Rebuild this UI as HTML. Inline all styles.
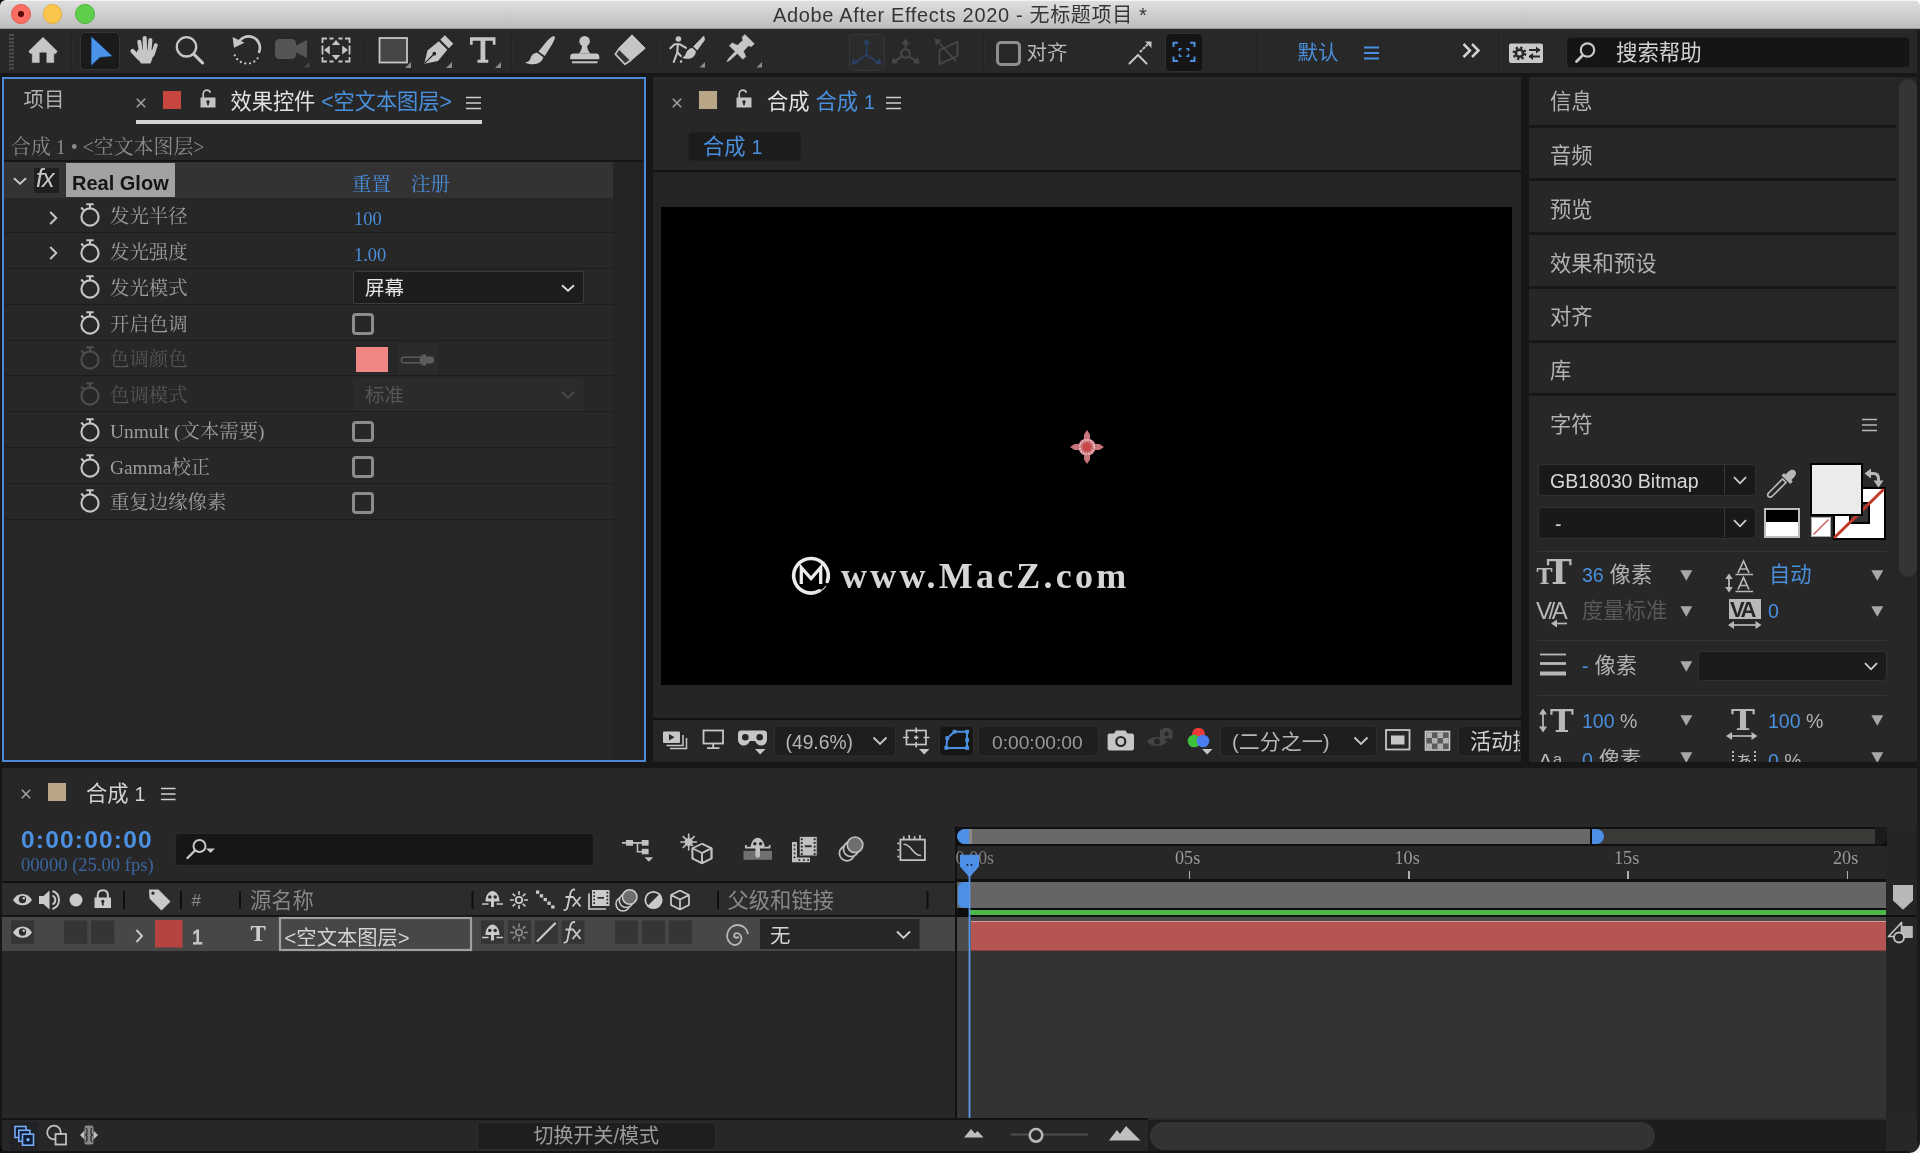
<!DOCTYPE html>
<html lang="zh-CN">
<head>
<meta charset="utf-8">
<title>Adobe After Effects 2020 - 无标题项目 *</title>
<style>
*{box-sizing:border-box;margin:0;padding:0}
html,body{width:1920px;height:1153px;overflow:hidden;background:#171717}
body{position:relative;will-change:transform;font-family:"Liberation Sans","Noto Sans CJK SC",sans-serif;color:#c8c8c8;font-size:19px;line-height:1}
div,span,svg{position:absolute}
.t{white-space:nowrap;line-height:1}
.sans{font-family:"Liberation Sans","Noto Sans CJK SC",sans-serif}
.serif{font-family:"Liberation Serif","Noto Serif CJK SC",serif}
.blue{color:#4a8fdc}
svg{overflow:visible}
span.i{position:static}
/* title bar */
#titlebar{left:0;top:0;width:1920px;height:29px;background:linear-gradient(#e0e0e0,#bdbdbd);border-bottom:1px solid #9a9a9a}
#titlebar .tl{width:19.6px;height:19.6px;border-radius:50%;top:4.3px}
#toolbar{left:0;top:29px;width:1920px;height:44px;background:#282828}
.panel{background:#272727}
.sep{left:4px;width:609px;height:1px;background:#1d1d1d}
.lbl{left:110px;font-size:19.4px;color:#9d9d9d}
.lbl.dis{color:#555}
.cb{left:352px;width:21.5px;height:21.5px;border:3px solid #8c8c8c;border-radius:4px}
.rp{left:1529px;width:368px;height:51px;background:#272727}
.rp .t{left:21px;top:14px;font-size:20px;color:#b4b4b4}
</style>
</head>
<body>
<!-- TITLEBAR -->
<div id="titlebar">
  <div class="tl" style="left:11px;background:#f96d62;border:1px solid #e35a50"></div>
  <div style="left:18px;top:11.3px;width:5.6px;height:5.6px;border-radius:50%;background:#5a0a06"></div>
  <div class="tl" style="left:42.8px;background:#fbc64b;border:1px solid #e3ad38"></div>
  <div class="tl" style="left:75.1px;background:#5fce4a;border:1px solid #4db33c"></div>
  <div class="t sans" style="left:773px;top:5px;font-size:20px;color:#353535;letter-spacing:0.66px">Adobe After Effects 2020 - 无标题项目 *</div>
</div>
<div id="toolbar"></div>
<!-- panel backgrounds -->
<div class="panel" style="left:2px;top:77px;width:644px;height:685px;border:2px solid #4d88d8"></div>
<div class="panel" style="left:653px;top:77px;width:868px;height:685px"></div>
<div class="panel" style="left:2px;top:768px;width:1916px;height:385px"></div>

<!-- TOOLBAR ICONS (page coords) -->
<svg style="left:0;top:28px" width="1920" height="46" viewBox="0 28 1920 46">
<g fill="#4d4d4d"><rect x="9" y="34" width="5" height="2"/><rect x="9" y="37.7" width="5" height="2"/><rect x="9" y="41.4" width="5" height="2"/><rect x="9" y="45.1" width="5" height="2"/><rect x="9" y="48.8" width="5" height="2"/><rect x="9" y="52.5" width="5" height="2"/><rect x="9" y="56.2" width="5" height="2"/><rect x="9" y="59.9" width="5" height="2"/><rect x="9" y="63.6" width="5" height="2"/><rect x="9" y="67.3" width="5" height="2"/></g>
<g stroke="#222" stroke-width="1"><path d="M71.5 34v36M364.5 34v36M511.5 34v36M657.5 34v36M714.5 34v36M810.5 34v36M983.5 34v36M1256.5 30v42M1498.5 30v42"/></g>
<g stroke="#2d2d2d" stroke-width="1"><path d="M72.5 34v36M365.5 34v36M512.5 34v36M658.5 34v36M715.5 34v36M811.5 34v36M984.5 34v36"/></g>
<!-- home -->
<path d="M43 37.3L57.2 51.2L55.8 53.6H53.8V62.6H46.8V52.3H39.3V62.6H32.2V53.6H30.2L28.8 51.2Z" fill="#c6c6c6" stroke="#c6c6c6" stroke-width="0.5" stroke-linejoin="round"/>
<!-- selection tool -->
<rect x="80.5" y="32.5" width="39" height="37" rx="4" fill="#1a1a1a" stroke="#343434"/>
<path d="M91 36L113 56.5L100 57.5L91 66Z" fill="#4b92ea" stroke="#122848" stroke-width="0.8"/>
<!-- hand -->
<g stroke="#c6c6c6" stroke-linecap="round" fill="none"><path d="M139.3 41.7L141 52" stroke-width="4.1"/><path d="M144.7 38.2L145 52" stroke-width="4.2"/><path d="M150.4 40L149.3 52" stroke-width="4.1"/><path d="M155.8 45.2L152.6 55" stroke-width="3.9"/><path d="M132.5 51L139 58" stroke-width="4.2"/></g>
<path d="M137.5 50H153.5C153.5 57 151.5 61 150.5 63.5H141C139.5 61 137 58 136 55Z" fill="#c6c6c6"/>
<!-- zoom -->
<circle cx="186.5" cy="46.8" r="9.7" stroke="#c6c6c6" stroke-width="2.3" fill="none"/><path d="M194 54.3L202.5 62.8" stroke="#c6c6c6" stroke-width="3.2" stroke-linecap="round"/>
<!-- rotate -->
<path d="M237.9 44.1A11.3 11.3 0 1 1 258.7 52.8" stroke="#c6c6c6" stroke-width="2.6" fill="none"/>
<path d="M232.6 37L244.5 42.8L234 47.8Z" fill="#c6c6c6"/>
<g fill="#c6c6c6"><circle cx="234.8" cy="55.3" r="1.15"/><circle cx="237.2" cy="59.2" r="1.15"/><circle cx="240.8" cy="62" r="1.15"/><circle cx="245.3" cy="63.4" r="1.15"/><circle cx="250" cy="63.3" r="1.15"/><circle cx="254.3" cy="61.5" r="1.15"/><circle cx="257.6" cy="58.3" r="1.15"/></g>
<!-- camera (disabled) -->
<rect x="275" y="39" width="21" height="20" rx="4.5" fill="#555"/><path d="M294 46.5L307 40V58L294 51.5Z" fill="#555"/><path d="M309.5 62v5.5H304Z" fill="#4a4a4a"/>
<!-- pan behind -->
<g stroke="#c6c6c6" stroke-width="1.8" fill="none"><path d="M327 38.5H322.5V43M322.5 57V61.5H327M345 38.5H349.5V43M349.5 57V61.5H345M329.5 38.5H333.5M338.5 38.5H342.5M329.5 61.5H333.5M338.5 61.5H342.5M322.5 45.5V54.5M349.5 45.5V54.5"/></g>
<path d="M336 40L340.2 45H331.8ZM336 60L340.2 55H331.8ZM324 50L329.8 45.5V54.5ZM348 50L342.2 45.5V54.5Z" fill="#c6c6c6"/>
<!-- rectangle -->
<rect x="379.5" y="38" width="27.5" height="24.5" fill="#464646" stroke="#c6c6c6" stroke-width="1.8"/><path d="M411 62v6H405Z" fill="#8c8c8c"/>
<!-- pen -->
<path d="M424.3 63.7L427.5 50.5L438.8 41.2L447.3 49.7L438 61Z" fill="#c6c6c6"/><path d="M424.8 63.2L433.5 54.5" stroke="#282828" stroke-width="1.2"/><circle cx="434.3" cy="53.7" r="1.9" fill="#282828"/>
<path d="M440.3 39.7L444.8 35.2L453.3 43.7L448.8 48.2Z" fill="#c6c6c6"/><path d="M452 62v6H446Z" fill="#8c8c8c"/>
<!-- T -->
<path d="M470 37.3H495.5V44.7H492.8V40.8H485.3V59.7H488.3V62.8H477.5V59.7H480.5V40.8H472.7V44.7H470Z" fill="#c6c6c6"/><path d="M501 62v6H495Z" fill="#8c8c8c"/>
<!-- brush -->
<path d="M554.3 36.3C555.5 37 554.8 40 552 44.5L544.8 56L538.5 51.5L547 41C550.3 37.2 553.2 35.6 554.3 36.3Z" fill="#c6c6c6"/>
<path d="M537.3 52.8L543.3 57.3C542.8 61 538.5 64.3 533 64.3C529.5 64.3 527 63.7 525 62.5C528 62.2 529.8 60.8 530.5 58.3C531.4 55 534.2 52.8 537.3 52.8Z" fill="#c6c6c6"/>
<!-- stamp -->
<circle cx="584.6" cy="41.2" r="5.3" fill="#c6c6c6"/><path d="M582 44H587.2C587 48 587.8 51 590.5 53.5H578.7C581.4 51 582.2 48 582 44Z" fill="#c6c6c6"/>
<path d="M573.5 53.5H596C598 53.5 599.3 54.8 599.3 56.5V59.3H570.2V56.5C570.2 54.8 571.5 53.5 573.5 53.5Z" fill="#c6c6c6"/><rect x="572" y="61.3" width="25.5" height="2" fill="#c6c6c6"/>
<!-- eraser -->
<path d="M632 34.8L645.2 48.3L631.5 60L619 48Z" fill="#c6c6c6" stroke="#c6c6c6" stroke-width="1" stroke-linejoin="round"/>
<path d="M619 48.6L630.8 60.2L625 64.3L615.3 54.2Z" fill="#343434" stroke="#c6c6c6" stroke-width="1.7" stroke-linejoin="round"/>
<!-- roto brush -->
<circle cx="678.4" cy="39" r="2.8" fill="#c6c6c6"/>
<g stroke="#c6c6c6" stroke-width="2.1" fill="none" stroke-linecap="round" stroke-linejoin="round"><path d="M670.3 48.3L674.5 44.3H680L686 47.8"/><path d="M677.8 44.5L677.3 52.5L673.8 62"/><path d="M677.5 52.5L680.8 56"/></g>
<circle cx="681" cy="61.5" r="1.2" fill="#c6c6c6"/>
<path d="M693.6 46.6L703.8 36L704.6 39.8L697.2 50Z" fill="#c6c6c6" stroke="#c6c6c6" stroke-width="0.8" stroke-linejoin="round"/>
<path d="M692.2 47.7L695.8 51C696.2 55 692.5 58.8 687.5 58.8C685.2 58.8 683.3 58.6 682 58C684.2 57 685.3 55.5 686 53.3C686.8 50.5 689.3 48.2 692.2 47.7Z" fill="#c6c6c6"/>
<path d="M705 62v5.5H699.5Z" fill="#8c8c8c"/>
<!-- pin -->
<path d="M744.9 34.4L754.3 43.8L751.5 46.6L748.4 45.7L743.4 51.2L745.8 56.5L743 59.3L737.2 53.5L729.8 60.3L727 61.7L728.4 58.9L735.2 51.5L729.4 45.7L732.2 42.9L737.5 45.3L743 40.3L742.1 37.2Z" fill="#c6c6c6" stroke="#c6c6c6" stroke-width="0.6" stroke-linejoin="round"/>
<path d="M762 62v5.5H756.5Z" fill="#8c8c8c"/>
<!-- axis modes (disabled) -->
<rect x="849.5" y="34.5" width="35" height="36" rx="4" fill="#2b2b2b" stroke="#363636"/>
<g stroke="#2a4064" stroke-width="1.7" fill="none"><path d="M866.5 42V55L855 62.5M866.5 55L878 62.5"/></g>
<path d="M866.5 38.5L870.5 44H862.5ZM851.5 64.5L853.3 58.3L858 64.3ZM881.5 64.5L879.7 58.3L875 64.3Z" fill="#2a4064"/>
<g stroke="#484848" stroke-width="2" fill="none"><path d="M905.5 43V49M901.7 56.5L894.5 61.5M909.3 56.5L916.5 61.5"/><circle cx="905.5" cy="53.5" r="4.3"/></g>
<path d="M905.5 38.5L909.5 44.5H901.5ZM891.5 63.5L893.3 57.3L898 63.3ZM919.5 63.5L917.7 57.3L913 63.3Z" fill="#484848"/>
<g stroke="#484848" stroke-width="1.8" fill="none"><path d="M939.5 50L957.5 42V56L939.5 64ZM939 43L956 61"/></g>
<path d="M934.5 38.5L941.3 40L936 45.3Z" fill="#484848"/>
<!-- snap checkbox -->
<rect x="997.5" y="42.5" width="22" height="22" rx="3.5" stroke="#8e8e8e" stroke-width="3" fill="none"/>
<!-- snap icon 1 -->
<g stroke="#c6c6c6" stroke-width="2" fill="none" stroke-linecap="round"><path d="M1129.5 63.5L1138 55L1146.5 63.5"/><path d="M1140.5 51.5L1147 45" stroke-dasharray="1.5 2.6"/></g>
<path d="M1145 41.5H1151.5V48Z" fill="#c6c6c6"/>
<!-- snap icon 2 -->
<rect x="1165.5" y="33.5" width="37.5" height="38" rx="4.5" fill="#151515" stroke="#303030"/>
<g stroke="#4b8fe2" stroke-width="2" fill="none"><path d="M1173.5 47V42.7H1178M1190 42.7H1194.5V47M1194.5 56.5V61H1190M1178 61H1173.5V56.5"/><path d="M1179.5 51.3V48.8H1181.7M1186.3 48.8H1188.5V51.3M1188.5 54V56.3H1186.3M1181.7 56.3H1179.5V54" stroke-width="1.6"/></g>
<!-- workspace hamburger -->
<path d="M1364 47.5H1379M1364 53H1379M1364 58.5H1379" stroke="#4b8fe2" stroke-width="1.9"/>
<!-- >> -->
<path d="M1463.5 44L1470 50.5L1463.5 57M1472 44L1478.5 50.5L1472 57" stroke="#d2d2d2" stroke-width="2.5" fill="none"/>
<!-- sync settings -->
<rect x="1509" y="43.5" width="34" height="19.5" rx="2" fill="#c8c8c8"/>
<g fill="none" stroke="#282828"><circle cx="1519.5" cy="53.3" r="3.6" stroke-width="2.6"/><circle cx="1519.5" cy="53.3" r="5.8" stroke-width="2.3" stroke-dasharray="2.3 2.25"/></g>
<path d="M1529 50H1540M1529 56.5H1540" stroke="#282828" stroke-width="2"/><path d="M1540.5 50L1536 46.5V53.5ZM1528.5 56.5L1533 53V60Z" fill="#282828"/>
<!-- search -->
<rect x="1566.5" y="37" width="343.5" height="31" rx="4.5" fill="#151515" stroke="#2c2c2c"/>
<circle cx="1587.5" cy="50" r="6.7" stroke="#c8c8c8" stroke-width="2.2" fill="none"/><path d="M1582.5 55.5L1576.5 61.5" stroke="#c8c8c8" stroke-width="2.8" stroke-linecap="round"/>
</svg>
<div class="t sans" style="left:1026.5px;top:43px;font-size:20.5px;color:#b8b8b8">对齐</div>
<div class="t sans blue" style="left:1297.5px;top:43px;font-size:20.5px">默认</div>
<div class="t sans" style="left:1616px;top:43px;font-size:21.4px;color:#d2d2d2">搜索帮助</div>

<!-- EFFECT CONTROLS PANEL -->
<div class="t sans" style="left:23.5px;top:90px;font-size:20.5px;color:#b0b0b0">项目</div>
<svg style="left:136px;top:98px" width="10" height="10" viewBox="0 0 10 10"><path d="M0.8 0.8L9.2 9.2M9.2 0.8L0.8 9.2" stroke="#a8a8a8" stroke-width="1.4" fill="none"/></svg>
<div style="left:163px;top:91px;width:18px;height:18px;background:#c9453f"></div>
<svg style="left:200px;top:89px" width="16" height="19" viewBox="0 0 16 19"><path d="M3.2 9V5.2C3.2 2.6 5 1.2 7 1.2c1.6 0 2.9 0.9 3.3 2.6" stroke="#c4c4c4" stroke-width="1.7" fill="none"/><path d="M0.5 8.5h15v10h-15z M8 11.2a1.7 1.7 0 0 0-0.9 3.15V16.3h1.8v-1.95A1.7 1.7 0 0 0 8 11.2z" fill="#c4c4c4" fill-rule="evenodd"/></svg>
<div class="t sans" style="left:230.5px;top:91px;font-size:21.2px;color:#e2e2e2">效果控件 <span class="i blue">&lt;空文本图层&gt;</span></div>
<svg style="left:466px;top:96px" width="16" height="14" viewBox="0 0 16 14"><path d="M0 1.5h15M0 7h15M0 12.5h15" stroke="#d0d0d0" stroke-width="1.7"/></svg>
<div style="left:136px;top:120px;width:346px;height:4px;background:#d4d4d4"></div>
<div class="t serif" style="left:11px;top:137.5px;font-size:19.9px;color:#8b8b8b">合成 1 • &lt;空文本图层&gt;</div>
<div style="left:4px;top:160px;width:639px;height:2px;background:#141414"></div>
<div style="left:613px;top:162px;width:30px;height:598px;background:#242424"></div>
<div style="left:4px;top:162px;width:609px;height:36px;background:#333333"></div>
<svg style="left:13px;top:177px" width="14" height="9" viewBox="0 0 14 9"><path d="M1 1.2L7 6.7L13 1.2" stroke="#c8c8c8" stroke-width="1.9" fill="none"/></svg>
<div style="left:34px;top:168px;width:25px;height:25px;background:#1f1f1f"></div>
<div class="t sans" style="left:36px;top:166px;font-size:25px;font-style:italic;color:#c8c8c8;letter-spacing:-1px">fx</div>
<div style="left:66px;top:163px;width:109px;height:34px;background:#a2a2a2"></div>
<div class="t sans" style="left:72px;top:173px;font-size:20px;font-weight:bold;color:#151515">Real Glow</div>
<div class="t serif blue" style="left:352px;top:174.5px;font-size:19.4px">重置</div>
<div class="t serif blue" style="left:411px;top:174.5px;font-size:19.4px">注册</div>
<div class="sep" style="top:232.4px"></div>
<svg style="left:80px;top:203.4px" width="20" height="24" viewBox="0 0 20 24"><circle cx="10" cy="14" r="8.6" stroke="#c6c6c6" stroke-width="2.1" fill="none"/><path d="M6.3 1.2h7.4M10 1.2v4M1.2 4.6l2.6 2.6" stroke="#c6c6c6" stroke-width="2.1" fill="none"/></svg>
<svg style="left:49px;top:210.7px" width="9" height="14" viewBox="0 0 9 14"><path d="M1.2 1L7.3 7L1.2 13" stroke="#c8c8c8" stroke-width="1.9" fill="none"/></svg>
<div class="t serif lbl" style="top:207.4px">发光半径</div>
<div class="sep" style="top:268.2px"></div>
<svg style="left:80px;top:239.1px" width="20" height="24" viewBox="0 0 20 24"><circle cx="10" cy="14" r="8.6" stroke="#c6c6c6" stroke-width="2.1" fill="none"/><path d="M6.3 1.2h7.4M10 1.2v4M1.2 4.6l2.6 2.6" stroke="#c6c6c6" stroke-width="2.1" fill="none"/></svg>
<svg style="left:49px;top:246.4px" width="9" height="14" viewBox="0 0 9 14"><path d="M1.2 1L7.3 7L1.2 13" stroke="#c8c8c8" stroke-width="1.9" fill="none"/></svg>
<div class="t serif lbl" style="top:243.1px">发光强度</div>
<div class="sep" style="top:303.9px"></div>
<svg style="left:80px;top:274.9px" width="20" height="24" viewBox="0 0 20 24"><circle cx="10" cy="14" r="8.6" stroke="#c6c6c6" stroke-width="2.1" fill="none"/><path d="M6.3 1.2h7.4M10 1.2v4M1.2 4.6l2.6 2.6" stroke="#c6c6c6" stroke-width="2.1" fill="none"/></svg>
<div class="t serif lbl" style="top:278.9px">发光模式</div>
<div class="sep" style="top:339.7px"></div>
<svg style="left:80px;top:310.6px" width="20" height="24" viewBox="0 0 20 24"><circle cx="10" cy="14" r="8.6" stroke="#c6c6c6" stroke-width="2.1" fill="none"/><path d="M6.3 1.2h7.4M10 1.2v4M1.2 4.6l2.6 2.6" stroke="#c6c6c6" stroke-width="2.1" fill="none"/></svg>
<div class="t serif lbl" style="top:314.6px">开启色调</div>
<div class="sep" style="top:375.4px"></div>
<svg style="left:80px;top:346.4px" width="20" height="24" viewBox="0 0 20 24"><circle cx="10" cy="14" r="8.6" stroke="#4e4e4e" stroke-width="2.1" fill="none"/><path d="M6.3 1.2h7.4M10 1.2v4M1.2 4.6l2.6 2.6" stroke="#4e4e4e" stroke-width="2.1" fill="none"/></svg>
<div class="t serif lbl dis" style="top:350.4px">色调颜色</div>
<div class="sep" style="top:411.2px"></div>
<svg style="left:80px;top:382.1px" width="20" height="24" viewBox="0 0 20 24"><circle cx="10" cy="14" r="8.6" stroke="#4e4e4e" stroke-width="2.1" fill="none"/><path d="M6.3 1.2h7.4M10 1.2v4M1.2 4.6l2.6 2.6" stroke="#4e4e4e" stroke-width="2.1" fill="none"/></svg>
<div class="t serif lbl dis" style="top:386.1px">色调模式</div>
<div class="sep" style="top:446.9px"></div>
<svg style="left:80px;top:417.9px" width="20" height="24" viewBox="0 0 20 24"><circle cx="10" cy="14" r="8.6" stroke="#c6c6c6" stroke-width="2.1" fill="none"/><path d="M6.3 1.2h7.4M10 1.2v4M1.2 4.6l2.6 2.6" stroke="#c6c6c6" stroke-width="2.1" fill="none"/></svg>
<div class="t serif lbl" style="top:421.9px">Unmult (文本需要)</div>
<div class="sep" style="top:482.7px"></div>
<svg style="left:80px;top:453.6px" width="20" height="24" viewBox="0 0 20 24"><circle cx="10" cy="14" r="8.6" stroke="#c6c6c6" stroke-width="2.1" fill="none"/><path d="M6.3 1.2h7.4M10 1.2v4M1.2 4.6l2.6 2.6" stroke="#c6c6c6" stroke-width="2.1" fill="none"/></svg>
<div class="t serif lbl" style="top:457.6px">Gamma校正</div>
<div class="sep" style="top:518.5px"></div>
<svg style="left:80px;top:489.4px" width="20" height="24" viewBox="0 0 20 24"><circle cx="10" cy="14" r="8.6" stroke="#c6c6c6" stroke-width="2.1" fill="none"/><path d="M6.3 1.2h7.4M10 1.2v4M1.2 4.6l2.6 2.6" stroke="#c6c6c6" stroke-width="2.1" fill="none"/></svg>
<div class="t serif lbl" style="top:493.4px">重复边缘像素</div>
<div class="t serif blue" style="left:354px;top:210px;font-size:18.4px">100</div>
<div class="t serif blue" style="left:354px;top:245.8px;font-size:18.4px">1.00</div>
<div style="left:353px;top:270.8px;width:231px;height:33px;background:#1d1d1d;border:1px solid #3b3b3b;border-radius:2px"></div>
<div class="t sans" style="left:365px;top:279.2px;font-size:19.5px;color:#e4e4e4">屏幕</div>
<svg style="left:561px;top:283.7px" width="14" height="9" viewBox="0 0 14 9"><path d="M1 1.2L7 6.7L13 1.2" stroke="#d8d8d8" stroke-width="1.9" fill="none"/></svg>
<div class="cb" style="top:313.2px"></div>
<div class="cb" style="top:420.5px"></div>
<div class="cb" style="top:456.2px"></div>
<div class="cb" style="top:492px"></div>
<div style="left:356px;top:347px;width:32px;height:25px;background:#f08784"></div>
<div style="left:397.5px;top:343.2px;width:40.5px;height:31px;background:#2b2b2b"></div>
<svg style="left:400px;top:352.5px" width="36" height="14" viewBox="0 0 36 14"><path d="M1.2 7c0-1.7 1.3-2.8 3-2.8H20.5v5.6H4.2C2.5 9.8 1.2 8.7 1.2 7z" stroke="#5c5c5c" stroke-width="1.5" fill="none"/><path d="M20 3.6h1.5V1.5h4.5v2.1H31.5a2.5 3.4 0 0 1 0 6.8H26v2.1h-4.5v-2.1H20z" fill="#5c5c5c"/></svg>
<div style="left:353px;top:378.1px;width:231px;height:33px;background:#2b2b2b;border-radius:2px"></div>
<div class="t sans" style="left:365px;top:386.4px;font-size:19.5px;color:#555">标准</div>
<svg style="left:561px;top:390.9px" width="14" height="9" viewBox="0 0 14 9"><path d="M1 1.2L7 6.7L13 1.2" stroke="#484848" stroke-width="1.9" fill="none"/></svg>
<!-- COMP PANEL -->
<svg style="left:672px;top:98px" width="10" height="10" viewBox="0 0 10 10"><path d="M0.8 0.8L9.2 9.2M9.2 0.8L0.8 9.2" stroke="#a8a8a8" stroke-width="1.4" fill="none"/></svg>
<div style="left:699px;top:91px;width:18px;height:18px;background:#b9a687"></div>
<svg style="left:736px;top:89px" width="16" height="19" viewBox="0 0 16 19"><path d="M3.2 9V5.2C3.2 2.6 5 1.2 7 1.2c1.6 0 2.9 0.9 3.3 2.6" stroke="#c4c4c4" stroke-width="1.7" fill="none"/><path d="M0.5 8.5h15v10h-15z M8 11.2a1.7 1.7 0 0 0-0.9 3.15V16.3h1.8v-1.95A1.7 1.7 0 0 0 8 11.2z" fill="#c4c4c4" fill-rule="evenodd"/></svg>
<div class="t sans" style="left:767px;top:91.5px;font-size:21.3px;color:#e2e2e2">合成 <span class="i blue">合成 <span class="i" style="font-size:19.5px">1</span></span></div>
<svg style="left:886px;top:96px" width="16" height="14" viewBox="0 0 16 14"><path d="M0 1.5h15M0 7h15M0 12.5h15" stroke="#d0d0d0" stroke-width="1.7"/></svg>
<div style="left:688px;top:132px;width:113px;height:29px;background:#1c1c1c;border:1px solid #202020;border-radius:4px"></div>
<div class="t sans blue" style="left:703px;top:137px;font-size:21.3px">合成 <span class="i" style="font-size:19.5px">1</span></div>
<div style="left:653px;top:170px;width:868px;height:2px;background:#121212"></div>
<div style="left:653px;top:172px;width:868px;height:546px;background:#242424"></div>
<div style="left:661px;top:207px;width:851px;height:478px;background:#000"></div>
<!-- anchor point -->
<svg style="left:1067px;top:426.5px" width="40" height="40" viewBox="0 0 40 40"><defs><filter id="bl"><feGaussianBlur stdDeviation="0.7"/></filter></defs><g filter="url(#bl)"><path d="M17 14V7.5L20 3L23 7.5V14L26 17H32.5L37 20L32.5 23H26L23 26V32.5L20 37L17 32.5V26L14 23H7.5L3 20L7.5 17H14Z" fill="#c9747c"/><circle cx="20" cy="20" r="8.8" fill="#c9747c"/><circle cx="20" cy="20" r="7.2" fill="none" stroke="#ecd0d0" stroke-width="1.8" stroke-dasharray="1.5 1.33"/><circle cx="20" cy="20" r="4.6" fill="#c84646"/></g></svg>
<!-- watermark -->
<svg style="left:789.2px;top:554.4px" width="44" height="44" viewBox="0 0 44 44"><path d="M30.5 36.8A17.3 17.3 0 1 1 38.3 27.5" stroke="#ececec" stroke-width="3.6" fill="none" stroke-linecap="round"/><path d="M12.3 30V13.5L22 24.5L31.7 13.5V30" stroke="#ececec" stroke-width="3.3" fill="none" stroke-linejoin="miter"/><path d="M26 39C30.5 38 34.5 35.5 37 32" stroke="#d0d0d0" stroke-width="1.2" fill="none"/></svg>
<div class="t serif" style="left:841px;top:557.7px;font-size:36px;font-weight:bold;color:#d6d6d6;letter-spacing:3.2px">www.MacZ.com</div>
<!-- comp footer -->
<div style="left:653px;top:718px;width:868px;height:2px;background:#111"></div>
<div style="left:653px;top:720px;width:868px;height:42px;background:#262626"></div>
<svg style="left:653px;top:720px" width="868" height="42" viewBox="653 720 868 42">
<!-- always preview -->
<rect x="663" y="731.5" width="17" height="11.5" rx="1" fill="#c6c6c6"/><path d="M669 734L674.5 737.3L669 740.6Z" fill="#262626"/>
<path d="M666.5 745.5H683V735M670 748.5H686.5V738" stroke="#c6c6c6" stroke-width="1.5" fill="none"/>
<!-- monitor -->
<rect x="703.5" y="730.5" width="19.5" height="13" stroke="#c6c6c6" stroke-width="1.8" fill="none"/><path d="M713.2 743.5V747.5M707 748.2H719.5" stroke="#c6c6c6" stroke-width="1.8"/>
<!-- goggles -->
<path d="M741 730.5H764C766 730.5 767 732 767 733.5V739C767 743 764.5 745.5 761.5 745.5C758 745.5 756.5 743.5 755 741H750C748.5 743.5 747 745.5 743.5 745.5C740.5 745.5 738 743 738 739V733.5C738 732 739 730.5 741 730.5Z" fill="#c6c6c6"/>
<circle cx="745.3" cy="737.3" r="3.3" fill="#262626"/><circle cx="759.7" cy="737.3" r="3.3" fill="#262626"/><path d="M755 749H765.5L760.2 754.5Z" fill="#c6c6c6"/>
<!-- zoom dropdown -->
<rect x="774.5" y="726" width="121" height="30" rx="4" fill="#1e1e1e" stroke="#2e2e2e"/>
<path d="M873.5 737.5L880 744L886.5 737.5" stroke="#c6c6c6" stroke-width="1.9" fill="none"/>
<!-- ROI -->
<rect x="906.5" y="730.5" width="19.5" height="14" stroke="#c6c6c6" stroke-width="1.7" fill="none"/><path d="M916.2 727.5V733M916.2 742V747.5M903 737.5H909M923.5 737.5H929.5M914 737.5H918.5M916.2 735.5V739.5" stroke="#c6c6c6" stroke-width="1.6"/><path d="M919 749H929.5L924.2 754.5Z" fill="#c6c6c6"/>
<!-- mask toggle -->
<rect x="939.5" y="726" width="34" height="30" rx="4" fill="#161616" stroke="#2c2c2c"/>
<path d="M946.3 748L947.3 738L954.5 731.7H967V748Z" stroke="#4b8fe2" stroke-width="2" fill="none"/><g fill="#4b8fe2"><rect x="944.4" y="746" width="3.8" height="3.8"/><rect x="945.4" y="736.2" width="3.8" height="3.8"/><rect x="952.6" y="729.8" width="3.8" height="3.8"/><rect x="965.2" y="729.8" width="3.8" height="3.8"/><rect x="965.2" y="746" width="3.8" height="3.8"/><rect x="965.2" y="738" width="3.8" height="3.8"/></g>
<!-- timecode box -->
<rect x="978.5" y="726" width="120" height="30" rx="4" fill="#1e1e1e" stroke="#2e2e2e"/>
<!-- camera -->
<path d="M1109.5 733.5H1114L1116 730.5H1125.5L1127.5 733.5H1132C1133 733.5 1134 734.3 1134 735.5V748.5C1134 749.6 1133 750.4 1132 750.4H1109.5C1108.5 750.4 1107.6 749.6 1107.6 748.5V735.5C1107.6 734.3 1108.5 733.5 1109.5 733.5Z" fill="#c6c6c6"/><circle cx="1120.8" cy="741.5" r="4.5" fill="#c6c6c6" stroke="#262626" stroke-width="2.2"/>
<!-- show snapshot (disabled) -->
<path d="M1147 741.5C1151 735.5 1163 735.5 1167 741.5C1163 747.5 1151 747.5 1147 741.5Z" fill="#444"/><circle cx="1157" cy="741.5" r="3" fill="#262626"/>
<path d="M1160 729.5H1163L1164 728H1169L1170 729.5H1172.5V738.5H1160Z" fill="#444"/><circle cx="1166.5" cy="734" r="2.2" fill="#262626"/>
<!-- RGB -->
<circle cx="1198.5" cy="734" r="6.3" fill="#ee3b3b"/><circle cx="1194" cy="741" r="6.3" fill="#3cc23c"/><circle cx="1203" cy="741" r="6.3" fill="#4a7cf0"/><path d="M1202 749H1212.5L1207.2 754.5Z" fill="#c6c6c6"/>
<!-- resolution -->
<rect x="1220.5" y="726" width="156" height="30" rx="4" fill="#1e1e1e" stroke="#2e2e2e"/>
<path d="M1354.5 737.5L1361 744L1367.5 737.5" stroke="#c6c6c6" stroke-width="1.9" fill="none"/>
<!-- ROI safe -->
<rect x="1386" y="730" width="23.5" height="19.5" stroke="#c6c6c6" stroke-width="1.8" fill="none"/><rect x="1391" y="735.5" width="13.5" height="9" fill="#c6c6c6"/>
<!-- checker -->
<rect x="1425.5" y="731.5" width="24" height="18.5" fill="#5a5a5a" stroke="#c6c6c6" stroke-width="1.6"/>
<g fill="#c6c6c6" opacity="0.8"><rect x="1426.5" y="732.5" width="5.5" height="5.5"/><rect x="1437.5" y="732.5" width="5.5" height="5.5"/><rect x="1432" y="738" width="5.5" height="5.5"/><rect x="1443" y="738" width="5.5" height="5.5"/><rect x="1426.5" y="743.5" width="5.5" height="5.5"/><rect x="1437.5" y="743.5" width="5.5" height="5.5"/></g>
<!-- camera dropdown (clipped) -->
<rect x="1458.5" y="726" width="80" height="30" rx="4" fill="#1e1e1e" stroke="#2e2e2e"/>
</svg>
<div class="t sans" style="left:785.5px;top:732.5px;font-size:19.3px;color:#b6b6b6">(49.6%)</div>
<div class="t sans" style="left:992px;top:732.5px;font-size:19.2px;color:#9a9a9a">0:00:00:00</div>
<div class="t sans" style="left:1232px;top:731px;font-size:21px;color:#b6b6b6"><span class="i" style="font-size:20.5px">(</span>二分之一<span class="i" style="font-size:20.5px">)</span></div>
<div style="left:1458px;top:724px;width:62px;height:34px;overflow:hidden"><div class="t sans" style="left:12px;top:8px;font-size:21.3px;color:#d2d2d2">活动摄像机</div></div>
<div style="left:1521px;top:720px;width:8px;height:42px;background:#171717"></div>

<!-- RIGHT PANELS -->
<div style="left:1529px;top:77px;width:367px;height:47.7px;background:#272727"></div>
<div class="t sans" style="left:1550px;top:92.3px;font-size:21.3px;color:#b2b2b2">信息</div>
<div style="left:1529px;top:127.7px;width:367px;height:50.7px;background:#272727"></div>
<div class="t sans" style="left:1550px;top:146px;font-size:21.3px;color:#b2b2b2">音频</div>
<div style="left:1529px;top:181.4px;width:367px;height:50.7px;background:#272727"></div>
<div class="t sans" style="left:1550px;top:199.7px;font-size:21.3px;color:#b2b2b2">预览</div>
<div style="left:1529px;top:235.1px;width:367px;height:50.7px;background:#272727"></div>
<div class="t sans" style="left:1550px;top:253.5px;font-size:21.3px;color:#b2b2b2">效果和预设</div>
<div style="left:1529px;top:288.9px;width:367px;height:50.7px;background:#272727"></div>
<div class="t sans" style="left:1550px;top:307.2px;font-size:21.3px;color:#b2b2b2">对齐</div>
<div style="left:1529px;top:342.6px;width:367px;height:50.7px;background:#272727"></div>
<div class="t sans" style="left:1550px;top:360.9px;font-size:21.3px;color:#b2b2b2">库</div>
<div style="left:1529px;top:396.3px;width:367px;height:365.7px;background:#272727"></div>
<div class="t sans" style="left:1550px;top:414.6px;font-size:21.3px;color:#b2b2b2">字符</div>
<svg style="left:1862px;top:418px" width="16" height="14" viewBox="0 0 16 14"><path d="M0 1.5h15M0 7h15M0 12.5h15" stroke="#b8b8b8" stroke-width="1.7"/></svg>
<div style="left:1896px;top:77px;width:21px;height:685px;background:#262626"></div>
<div style="left:1898.5px;top:78.5px;width:18px;height:498px;background:#353535;border-radius:9px"></div>
<div style="left:1538px;top:464.2px;width:218px;height:31.7px;background:#191919;border:1px solid #303030;border-radius:4px"></div>
<div style="left:1724px;top:465.2px;width:1px;height:29px;background:#383838"></div>
<svg style="left:1733px;top:475.7px" width="14" height="9" viewBox="0 0 14 9"><path d="M1 1.2L7 7.3L13 1.2" stroke="#d0d0d0" stroke-width="1.8" fill="none"/></svg>
<div style="left:1538px;top:507px;width:218px;height:31.7px;background:#191919;border:1px solid #303030;border-radius:4px"></div>
<div style="left:1724px;top:508px;width:1px;height:29px;background:#383838"></div>
<svg style="left:1733px;top:518.5px" width="14" height="9" viewBox="0 0 14 9"><path d="M1 1.2L7 7.3L13 1.2" stroke="#d0d0d0" stroke-width="1.8" fill="none"/></svg>
<div class="t sans" style="left:1550px;top:472px;font-size:19.5px;color:#d8d8d8">GB18030 Bitmap</div>
<div class="t sans" style="left:1555px;top:515px;font-size:19.5px;color:#d8d8d8">-</div>
<svg style="left:1766px;top:466px" width="33" height="33" viewBox="0 0 33 33"><path d="M3 26.5L16.5 13L20 16.5L6.5 30C5 31.3 3.3 31.3 2.3 30.3C1.3 29.3 1.5 27.8 3 26.5Z" stroke="#b8b8b8" stroke-width="1.7" fill="none"/><path d="M15.5 9.5L18 7L19.5 8.5L22.5 5.5C24.5 3.5 27.5 3.3 29 4.8C30.5 6.3 30.3 9 28.3 11L25.3 14L26.8 15.5L24.3 18Z" fill="#b8b8b8"/></svg>
<div style="left:1832.5px;top:487px;width:53.5px;height:52.5px;background:#fff;border:2px solid #000"></div>
<div style="left:1848.5px;top:502px;width:21px;height:21.5px;background:#333;border:2px solid #000"></div>
<svg style="left:1832px;top:487px" width="54" height="53" viewBox="0 0 54 53"><path d="M2 51L52 2" stroke="#c0392b" stroke-width="3"/></svg>
<div style="left:1809.5px;top:463px;width:53px;height:52.5px;background:#ebebeb;border:2px solid #000"></div>
<svg style="left:1864px;top:466px" width="21" height="22" viewBox="0 0 21 22"><path d="M5 7.5H9.5C13 7.5 14.5 9.5 14.5 13V15" stroke="#b8b8b8" stroke-width="3" fill="none"/><path d="M0.5 7.5L7 2.5V12.5ZM14.5 21.5L9.5 14.5H19.5Z" fill="#b8b8b8"/></svg>
<div style="left:1764px;top:508px;width:36px;height:30px;background:#fff;border:2px solid #bdbdbd"></div><div style="left:1766px;top:510px;width:32px;height:12px;background:#000"></div>
<div style="left:1811px;top:516.5px;width:20px;height:20px;background:#fff;border:1.5px solid #aaa"></div>
<svg style="left:1811px;top:516.5px" width="20" height="20" viewBox="0 0 20 20"><path d="M2.5 17.5L17.5 2.5" stroke="#c0504a" stroke-width="1.3"/></svg>
<div style="left:1538px;top:550.5px;width:349px;height:1px;background:#343434"></div>
<div style="left:1538px;top:639.5px;width:349px;height:1px;background:#343434"></div>
<div style="left:1538px;top:695px;width:349px;height:1px;background:#343434"></div>
<div class="t sans" style="left:1582px;top:564.5px;font-size:21.3px;color:#b2b2b2"><span class="i blue" style="font-size:19.5px">36</span> 像素</div>
<svg style="left:1680px;top:569.5px" width="13" height="11" viewBox="0 0 13 11"><path d="M0.3 0.3H12.3L6.3 10.8Z" fill="#a8a8a8"/></svg>
<svg style="left:1871px;top:569.5px" width="13" height="11" viewBox="0 0 13 11"><path d="M0.3 0.3H12.3L6.3 10.8Z" fill="#a8a8a8"/></svg>
<div class="t sans blue" style="left:1769px;top:564.5px;font-size:21.3px">自动</div>
<div class="t sans" style="left:1582px;top:600.5px;font-size:21.3px;color:#585858">度量标准</div>
<svg style="left:1680px;top:605.5px" width="13" height="11" viewBox="0 0 13 11"><path d="M0.3 0.3H12.3L6.3 10.8Z" fill="#a8a8a8"/></svg>
<svg style="left:1871px;top:605.5px" width="13" height="11" viewBox="0 0 13 11"><path d="M0.3 0.3H12.3L6.3 10.8Z" fill="#a8a8a8"/></svg>
<div class="t sans blue" style="left:1768px;top:602px;font-size:19.5px">0</div>
<div class="t sans" style="left:1582px;top:656px;font-size:21.3px;color:#b2b2b2"><span class="i blue" style="font-size:19.5px">-</span> 像素</div>
<svg style="left:1680px;top:660.5px" width="13" height="11" viewBox="0 0 13 11"><path d="M0.3 0.3H12.3L6.3 10.8Z" fill="#a8a8a8"/></svg>
<div style="left:1697.5px;top:650.5px;width:189.5px;height:30.5px;background:#1b1b1b;border:1px solid #303030;border-radius:4px"></div>
<svg style="left:1864px;top:662px" width="14" height="9" viewBox="0 0 14 9"><path d="M1 1.2L7 7.3L13 1.2" stroke="#d0d0d0" stroke-width="1.8" fill="none"/></svg>
<div class="t sans" style="left:1582px;top:711.5px;font-size:19.5px;color:#b2b2b2"><span class="i blue">100</span> %</div>
<div class="t sans" style="left:1768px;top:712px;font-size:19.5px;color:#b2b2b2"><span class="i blue">100</span> %</div>
<svg style="left:1680px;top:714.5px" width="13" height="11" viewBox="0 0 13 11"><path d="M0.3 0.3H12.3L6.3 10.8Z" fill="#a8a8a8"/></svg>
<svg style="left:1871px;top:714.5px" width="13" height="11" viewBox="0 0 13 11"><path d="M0.3 0.3H12.3L6.3 10.8Z" fill="#a8a8a8"/></svg>
<div style="left:1529px;top:740px;width:367px;height:22px;overflow:hidden">
<div class="t sans" style="left:53px;top:9.5px;font-size:21.3px;color:#b2b2b2"><span class="i blue" style="font-size:19.5px">0</span> 像素</div>
<div class="t sans" style="left:239px;top:11.5px;font-size:19.5px;color:#b2b2b2"><span class="i blue">0</span> %</div>
<svg style="left:151px;top:12px" width="13" height="11" viewBox="0 0 13 11"><path d="M0.3 0.3H12.3L6.3 10.8Z" fill="#a8a8a8"/></svg>
<svg style="left:342px;top:12px" width="13" height="11" viewBox="0 0 13 11"><path d="M0.3 0.3H12.3L6.3 10.8Z" fill="#a8a8a8"/></svg>
<div class="t sans" style="left:9px;top:10.5px;font-size:22px;color:#b8b8b8">A<span class="i" style="font-size:17px;vertical-align:top">a</span></div>
<div class="t sans" style="left:203px;top:11px;font-size:17px;color:#b8b8b8;border-left:2px dotted #b8b8b8;border-right:2px dotted #b8b8b8;width:24px;height:22px;padding:3px 1.5px">あ</div>
</div>
<!-- character panel icons -->
<div class="t" style="font-family:'DejaVu Serif','Liberation Serif',serif;left:1546.5px;top:554.5px;font-size:34px;font-weight:bold;color:#b8b8b8">T</div>
<div class="t" style="font-family:'DejaVu Serif','Liberation Serif',serif;left:1536.5px;top:566px;font-size:21.5px;font-weight:bold;color:#b8b8b8">T</div>
<svg style="left:1723px;top:558px" width="34" height="36" viewBox="0 0 34 36"><g stroke="#b8b8b8" fill="none"><path d="M15 15L20.5 3L26 15M17 11H24M12.5 16.5H30" stroke-width="1.7"/><path d="M15 31.5L20.5 19.5L26 31.5M17 27.5H24M12.5 33.5H30" stroke-width="1.7"/><path d="M6 19V31" stroke-width="1.8"/></g><path d="M6 15.5L9.8 21H2.2ZM6 34.5L9.8 29H2.2Z" fill="#b8b8b8"/></svg>
<div class="t sans" style="left:1536px;top:599px;font-size:24px;color:#b8b8b8;letter-spacing:-3.5px">V/A</div>
<svg style="left:1551px;top:619px" width="17" height="9" viewBox="0 0 17 9"><path d="M4 4.5H16" stroke="#b8b8b8" stroke-width="1.7"/><path d="M0 4.5L6 0.5V8.5Z" fill="#b8b8b8"/></svg>
<div style="left:1728.5px;top:598.5px;width:32.5px;height:20.5px;background:#b8b8b8"></div>
<div class="t sans" style="left:1730px;top:598.5px;font-size:22px;font-weight:bold;color:#262626;letter-spacing:-2.5px">VA</div>
<svg style="left:1728px;top:620px" width="34" height="10" viewBox="0 0 34 10"><path d="M4 5H30" stroke="#b8b8b8" stroke-width="1.7"/><path d="M0 5L6 1V9ZM33.5 5L27.5 1V9Z" fill="#b8b8b8"/></svg>
<svg style="left:1540px;top:652px" width="27" height="25" viewBox="0 0 27 25"><path d="M0 2.5H26" stroke="#b8b8b8" stroke-width="1.8"/><path d="M0 11.5H26" stroke="#b8b8b8" stroke-width="2.8"/><path d="M0 21.5H26" stroke="#b8b8b8" stroke-width="4"/></svg>
<svg style="left:1538px;top:708px" width="10" height="25" viewBox="0 0 10 25"><path d="M5 4V21" stroke="#b8b8b8" stroke-width="1.7"/><path d="M5 0.5L9 6.5H1ZM5 24.5L9 18.5H1Z" fill="#b8b8b8"/></svg>
<div class="t" style="font-family:'DejaVu Serif','Liberation Serif',serif;left:1550px;top:705px;font-size:32px;font-weight:bold;color:#b8b8b8">T</div>
<div class="t" style="font-family:'DejaVu Serif','Liberation Serif',serif;left:1730.5px;top:707px;font-size:28px;font-weight:bold;color:#b8b8b8;transform:scaleX(1.15);transform-origin:0 0">T</div>
<svg style="left:1726px;top:731px" width="32" height="10" viewBox="0 0 32 10"><path d="M4 5H28" stroke="#b8b8b8" stroke-width="1.7"/><path d="M0 5L6 1V9ZM31.5 5L25.5 1V9Z" fill="#b8b8b8"/></svg>

<!-- TIMELINE PANEL -->
<svg style="left:21px;top:789px" width="10" height="10" viewBox="0 0 10 10"><path d="M0.8 0.8L9.2 9.2M9.2 0.8L0.8 9.2" stroke="#a8a8a8" stroke-width="1.4" fill="none"/></svg>
<div style="left:48px;top:783px;width:18px;height:18px;background:#b9a687"></div>
<div class="t sans" style="left:86px;top:784px;font-size:21.3px;color:#d2d2d2">合成 <span class="i" style="font-size:19.5px">1</span></div>
<svg style="left:161px;top:787px" width="16" height="14" viewBox="0 0 16 14"><path d="M0 1.5h14.5M0 7h14.5M0 12.5h14.5" stroke="#d0d0d0" stroke-width="1.7"/></svg>
<div class="t sans" style="left:21px;top:828px;font-size:24.5px;font-weight:bold;color:#4c90e2;letter-spacing:1.2px">0:00:00:00</div>
<div class="t serif" style="left:21px;top:856px;font-size:18.6px;color:#3a659e">00000 (25.00 fps)</div>
<div style="left:175px;top:832.5px;width:419px;height:33px;background:#161616;border:1px solid #2a2a2a;border-radius:4px"></div>
<svg style="left:186px;top:838px" width="32" height="22" viewBox="0 0 32 22"><circle cx="13.5" cy="8" r="6" stroke="#c8c8c8" stroke-width="2" fill="none"/><path d="M9 12.5L1.5 20" stroke="#c8c8c8" stroke-width="2.4" stroke-linecap="round"/><path d="M20 10.5H29L24.5 15Z" fill="#c8c8c8"/></svg>
<!-- header line & rows -->
<div style="left:2px;top:881px;width:953px;height:2px;background:#121212"></div>
<div style="left:2px;top:883px;width:953px;height:32px;background:#2c2c2c"></div>
<div style="left:2px;top:914.5px;width:953px;height:2px;background:#161616"></div>
<div style="left:2px;top:916.5px;width:953px;height:34.5px;background:#474747"></div>
<div style="left:955px;top:826px;width:2px;height:294px;background:#111"></div>
<div style="left:2px;top:1118px;width:953px;height:2px;background:#141414"></div>
<!-- right timeline area -->
<div style="left:957px;top:916px;width:929px;height:202px;background:#333"></div>
<div style="left:1886px;top:826px;width:32px;height:292px;background:#252525"></div>
<div style="left:955px;top:826.5px;width:932px;height:19px;background:#0f0f0f"></div>
<div style="left:962px;top:829px;width:1913px;height:14.5px;background:#3b3a36;width:913px"></div>
<div style="left:969px;top:829px;width:622px;height:14.5px;background:#696969"></div>
<div style="left:969px;top:829px;width:3px;height:14.5px;background:#8a8a8a"></div>
<div style="left:956.5px;top:829px;width:12.5px;height:14.5px;background:#4b8fe6;border-radius:8px 0 0 8px"></div>
<div style="left:1591px;top:829px;width:13px;height:14.5px;background:#4b8fe6;border-radius:0 8px 8px 0"></div>
<div style="left:1590px;top:829px;width:1.5px;height:14.5px;background:#0f0f0f"></div>
<div style="left:1875px;top:827px;width:12px;height:18px;background:#1a1a1a;border-radius:0 0 8px 0"></div>
<!-- ruler -->
<div class="t serif" style="left:955.5px;top:849.5px;font-size:17.8px;color:#808080">0:00s</div>
<div class="t serif" style="left:1175px;top:849px;font-size:18.2px;color:#9a9a9a">05s</div>
<div class="t serif" style="left:1394.5px;top:849px;font-size:18.2px;color:#9a9a9a">10s</div>
<div class="t serif" style="left:1614px;top:849px;font-size:18.2px;color:#9a9a9a">15s</div>
<div class="t serif" style="left:1833px;top:849px;font-size:18.2px;color:#9a9a9a">20s</div>
<div style="left:1188.5px;top:871px;width:1.5px;height:8px;background:#b0b0b0"></div>
<div style="left:1408px;top:871px;width:1.5px;height:8px;background:#b0b0b0"></div>
<div style="left:1627px;top:871px;width:1.5px;height:8px;background:#b0b0b0"></div>
<div style="left:1846.5px;top:871px;width:1.5px;height:8px;background:#b0b0b0"></div>
<div style="left:957px;top:879px;width:929px;height:2.5px;background:#111"></div>
<!-- work area -->
<div style="left:957px;top:881.5px;width:929px;height:26.5px;background:#656565"></div>
<div style="left:958px;top:881.5px;width:10.5px;height:26.5px;background:#4b8fe6;border-radius:6px 0 0 6px"></div>
<div style="left:957px;top:908px;width:929px;height:9px;background:#0e0e0e"></div>
<div style="left:970px;top:909.7px;width:916px;height:5.5px;background:#4cb848"></div>
<div style="left:957px;top:916.5px;width:929px;height:34.5px;background:#4a4a4a"></div>
<div style="left:970.5px;top:920.5px;width:915.5px;height:30px;background:#b45553;border-top:1.5px solid #d89a98;border-bottom:1px solid #8a3f3d"></div>
<!-- playhead -->
<svg style="left:959px;top:854px" width="22" height="266" viewBox="0 0 22 266"><path d="M1 0.8H20V12.5L10.5 23.5L1 12.5Z" fill="#4b8fe6"/><path d="M10.5 10V266" stroke="#5b98e8" stroke-width="1.8"/><rect x="7.5" y="10" width="1.8" height="1.8" fill="#1a2a44"/><rect x="11.5" y="10" width="1.8" height="1.8" fill="#1a2a44"/></svg>
<!-- right markers -->
<div style="left:1886px;top:915px;width:30px;height:1.5px;background:#0e0e0e"></div>
<svg style="left:1886px;top:880px" width="32" height="72" viewBox="1886 880 32 72"><path d="M1893 885H1913V900.5L1903 909.7L1893 900.5Z" fill="#b8b8b8"/><path d="M1888.5 936.5L1901.5 922.5V936.5Z" fill="none" stroke="#c4c4c4" stroke-width="1.7" stroke-linejoin="round"/><rect x="1901.6" y="926" width="11.2" height="12" fill="#b8b8b8"/><circle cx="1899" cy="937.5" r="5" fill="#262626" stroke="#c4c4c4" stroke-width="1.8"/></svg>
<!-- bottom bar -->
<div style="left:957px;top:1118px;width:929px;height:2px;background:#2a2a2a"></div>
<div style="left:957px;top:1118px;width:191px;height:2px;background:#121212"></div>
<div style="left:1148px;top:1120px;width:738px;height:33px;background:#1d1d1d"></div>
<div style="left:1150px;top:1122px;width:505px;height:28px;background:#333;border-radius:14px"></div>
<div style="left:1886px;top:1118px;width:32px;height:35px;background:#272727"></div>
<div style="left:477px;top:1122px;width:239px;height:28px;background:#1e1e1e;border:1px solid #303030;border-radius:4px"></div>
<div class="t sans" style="left:533.5px;top:1126px;font-size:20px;color:#9c9c9c">切换开关/模式</div>
<svg style="left:957px;top:1120px" width="200" height="33" viewBox="957 1120 200 33"><path d="M964 1137.5L971 1129L975 1133.5L977.5 1131L983.5 1137.5Z" fill="#c0c0c0"/><path d="M1011 1134.5H1088" stroke="#4e4e4e" stroke-width="2"/><circle cx="1036" cy="1135.3" r="6.3" fill="#272727" stroke="#b8b8b8" stroke-width="2.6"/><path d="M1109 1140.5L1117 1130L1120 1134L1126 1126L1140.5 1140.5Z" fill="#c0c0c0"/></svg>

<!-- timeline column header + layer row -->
<svg style="left:0;top:826px" width="956" height="130" viewBox="0 826 956 130">
<defs>
<g id="eye"><path d="M0 6.5C4 -1.5 15 -1.5 19 6.5C15 13.5 4 13.5 0 6.5Z" fill="#cacaca"/><circle cx="9.5" cy="6" r="3.7" fill="#2c2c2c"/><circle cx="10.8" cy="4.8" r="1.2" fill="#cacaca"/></g>
<g id="shy"><path d="M3.5 11C3.5 4 7.5 0.5 10.5 0.5C13.5 0.5 17.5 4 17.5 11H12V16.5H9V11Z" fill="#cacaca"/><circle cx="7.8" cy="6.5" r="1.8" fill="#2c2c2c"/><circle cx="13.2" cy="6.5" r="1.8" fill="#2c2c2c"/><path d="M0 13.5H6.5M14.5 13.5H21" stroke="#cacaca" stroke-width="1.7"/></g>
<g id="sun"><circle cx="9" cy="9" r="3.2" fill="none" stroke-width="1.8"/><path d="M9 0V4M9 14V18M0 9H4M14 9H18M2.6 2.6L5.3 5.3M12.7 12.7L15.4 15.4M15.4 2.6L12.7 5.3M5.3 12.7L2.6 15.4" stroke-width="1.6"/></g>
<g id="fxi"><path d="M0.5 21C2.5 21.5 4 20.5 4.5 18L7.5 4C8.2 1 10 0 12 0.8M2.5 8H10.5M10 8L17.5 17.5M17.5 8L9.5 17.5" fill="none" stroke-width="1.8"/></g>
</defs>
<!-- top icons -->
<g stroke="#c0c0c0" fill="none" stroke-width="1.6"><path d="M622 842.9H648M637.5 842.9V851.7H642"/></g><g fill="#c0c0c0"><rect x="626" y="840" width="7" height="5.7"/><rect x="641.8" y="840" width="6.8" height="5.7"/><rect x="641.8" y="848.8" width="6.8" height="5.5"/><path d="M644.5 857.3H653.2L648.8 861.8Z"/></g>
<g stroke="#c0c0c0" fill="none" stroke-width="1.8" stroke-linejoin="round"><path d="M702 843.8L711.5 848.3V858.5L702 863.3L692.5 858.5V848.3ZM692.5 848.3L702 853L711.5 848.3M702 853V863.3"/></g>
<g stroke="#c0c0c0" stroke-width="1.6"><path d="M688.7 833.5V850.5M680.3 842H697M682.8 836.1L694.6 847.9M694.6 836.1L682.8 847.9"/></g><circle cx="688.7" cy="842" r="4" fill="#c0c0c0"/><path d="M692 846.5L702 842.5L703 853L693.5 857Z" fill="#282828"/>
<g stroke="#c0c0c0" fill="none" stroke-width="1.8" stroke-linejoin="round"><path d="M702 843.8L711.5 848.3V858.5L702 863.3L692.5 858.5V848.3ZM692.5 848.3L702 853L711.5 848.3M702 853V863.3"/></g>
<rect x="743.5" y="850.8" width="28.5" height="9" fill="#707070"/><path d="M750.6 848.5C750.6 841.5 754.5 837.7 757.7 837.7C760.9 837.7 764.8 841.5 764.8 848.5H760V855.5A2.3 2.3 0 0 1 755.4 855.5V848.5Z" fill="#c0c0c0"/><circle cx="754.8" cy="843.8" r="1.7" fill="#282828"/><circle cx="760.6" cy="843.8" r="1.7" fill="#282828"/><path d="M745.8 845V847.7H751M769.6 845V847.7H764.5" stroke="#c0c0c0" stroke-width="1.7" fill="none"/>
<path d="M792 842H797V857.5H810V862.3H792Z" fill="#c0c0c0"/><g fill="#282828"><rect x="793.7" y="844.5" width="1.7" height="1.7"/><rect x="793.7" y="848.5" width="1.7" height="1.7"/><rect x="793.7" y="852.5" width="1.7" height="1.7"/><rect x="793.7" y="856.5" width="1.7" height="1.7"/><rect x="798.5" y="859.2" width="1.7" height="1.7"/><rect x="803" y="859.2" width="1.7" height="1.7"/><rect x="807.3" y="859.2" width="1.7" height="1.7"/></g>
<rect x="799.2" y="836.3" width="18" height="19.7" fill="#c0c0c0" stroke="#282828" stroke-width="1"/><g fill="#282828"><rect x="800.8" y="838.3" width="1.9" height="1.9"/><rect x="800.8" y="842" width="1.9" height="1.9"/><rect x="800.8" y="845.7" width="1.9" height="1.9"/><rect x="800.8" y="849.4" width="1.9" height="1.9"/><rect x="800.8" y="853" width="1.9" height="1.9"/><rect x="813.7" y="838.3" width="1.9" height="1.9"/><rect x="813.7" y="842" width="1.9" height="1.9"/><rect x="813.7" y="845.7" width="1.9" height="1.9"/><rect x="813.7" y="849.4" width="1.9" height="1.9"/><rect x="813.7" y="853" width="1.9" height="1.9"/><rect x="804.8" y="845.3" width="6.8" height="1.9"/></g>
<g stroke="#c0c0c0" stroke-width="1.7"><circle cx="847" cy="853.2" r="7.6" fill="#282828"/><circle cx="851" cy="849" r="7.6" fill="#282828"/><circle cx="855" cy="844.8" r="7.8" fill="#6e6e6e"/></g>
<g stroke="#c0c0c0" stroke-width="1.8" fill="none"><rect x="900.4" y="839.6" width="24.5" height="20.5"/><path d="M903.5 844.3C912 844.3 912.5 855.5 921 855.5" stroke-width="1.6"/><path d="M903.8 836.3V839M909.2 835V839M914.6 836.3V839M920 835V839M897.3 843.3H899.5M897.3 850H899.5M897.3 856.7H899.5" stroke-width="1.7"/></g>
<!-- header icons -->
<use href="#eye" x="13" y="893.5"/>
<path d="M39 896H43.5L49.5 890.5V909.5L43.5 904H39Z" fill="#cacaca"/><path d="M52.5 895.5A5 5 0 0 1 52.5 904.5M52.5 891A9.5 9.5 0 0 1 52.5 909" stroke="#cacaca" stroke-width="1.9" fill="none"/>
<circle cx="76" cy="900" r="6.5" fill="#cacaca"/>
<path d="M97.7 898V895.5C97.7 892 100 890.3 102.8 890.3C105.6 890.3 107.9 892 107.9 895.5V898" stroke="#cacaca" stroke-width="2" fill="none"/><path d="M94.5 897.5H111V908H94.5ZM102.8 899.8A1.7 1.7 0 0 0 101.9 902.9V905.5H103.7V902.9A1.7 1.7 0 0 0 102.8 899.8Z" fill="#cacaca" fill-rule="evenodd"/>
<path d="M124 891V909M181 891V909M240 891V909M472.5 891V909M718 891V909M927.5 891V909" stroke="#0e0e0e" stroke-width="2"/>
<path d="M149 889.5H158.5L170.5 901.5L161.5 910.5L149.5 898.5ZM153 891.5A1.6 1.6 0 1 0 153 894.8A1.6 1.6 0 1 0 153 891.5Z" fill="#cacaca" fill-rule="evenodd"/>
<use href="#shy" x="482" y="890.5"/>
<g stroke="#cacaca"><use href="#sun" x="510" y="891"/></g>
<g fill="#cacaca"><rect x="536" y="890.5" width="3.3" height="3.3"/><rect x="539.8" y="894.2" width="3.3" height="3.3"/><rect x="543.6" y="897.9" width="3.3" height="3.3"/><rect x="547.4" y="901.6" width="3.3" height="3.3"/><rect x="551.2" y="905.3" width="3.3" height="3.3"/></g>
<g stroke="#cacaca"><use href="#fxi" x="563" y="889"/></g>
<path d="M589 893.5V909H606" stroke="#cacaca" stroke-width="1.7" fill="none"/><rect x="592" y="890" width="17.5" height="16" fill="#cacaca"/><g fill="#282828"><rect x="593.3" y="891.8" width="1.7" height="1.7"/><rect x="593.3" y="895.3" width="1.7" height="1.7"/><rect x="593.3" y="898.8" width="1.7" height="1.7"/><rect x="593.3" y="902.3" width="1.7" height="1.7"/><rect x="606.5" y="891.8" width="1.7" height="1.7"/><rect x="606.5" y="895.3" width="1.7" height="1.7"/><rect x="606.5" y="898.8" width="1.7" height="1.7"/><rect x="606.5" y="902.3" width="1.7" height="1.7"/><rect x="597.5" y="897" width="6.5" height="1.7"/></g>
<g stroke="#cacaca" stroke-width="1.6"><circle cx="623" cy="904" r="7" fill="#2c2c2c"/><circle cx="626.3" cy="900.5" r="7" fill="#2c2c2c"/><circle cx="629.7" cy="897" r="7.3" fill="#6e6e6e"/></g>
<circle cx="653.5" cy="900" r="8.2" fill="none" stroke="#cacaca" stroke-width="1.8"/><path d="M659.3 894.2A8.2 8.2 0 0 1 647.7 905.8Z" fill="#cacaca"/>
<path d="M680 890.5L689 895V905L680 909.5L671 905V895ZM671 895L680 899.5L689 895M680 899.5V909.5" stroke="#cacaca" stroke-width="1.7" fill="none" stroke-linejoin="round"/>
<!-- layer row cells -->
<g fill="#353535"><rect x="11" y="920.5" width="23" height="23.3"/><rect x="64" y="920.5" width="23.3" height="23.3"/><rect x="91" y="920.5" width="23.3" height="23.3"/><rect x="481" y="920.5" width="23" height="23.3"/><rect x="508" y="920.5" width="23" height="23.3"/><rect x="534.8" y="920.5" width="23" height="23.3"/><rect x="561.5" y="920.5" width="23" height="23.3"/><rect x="615" y="920.5" width="23" height="23.3"/><rect x="642" y="920.5" width="23" height="23.3"/><rect x="668.8" y="920.5" width="23.2" height="23.3"/></g>
<use href="#eye" x="13" y="926"/>
<path d="M136.5 930L142 936L136.5 942" stroke="#cacaca" stroke-width="1.9" fill="none"/>
<rect x="155" y="920" width="27.5" height="27.5" fill="#b5433f"/>
<use href="#shy" x="482" y="924"/>
<g stroke="#8a8a8a"><use href="#sun" x="510" y="923.5"/></g>
<path d="M537.5 941L555 923.5" stroke="#cacaca" stroke-width="2.2" stroke-linecap="round"/>
<g stroke="#cacaca"><use href="#fxi" x="563" y="921.5"/></g>
<!-- name box -->
<rect x="280" y="918" width="191" height="32" fill="#474747" stroke="#a0a0a0" stroke-width="2.2"/>
<!-- spiral -->
<path d="M738.5 936.5A2.3 2.3 0 1 1 736.5 933.2A5 5 0 0 1 741.5 938.5A7 7 0 0 1 734 945A9.5 9.5 0 0 1 727.5 933A10.5 10.5 0 0 1 738 925A10.5 10.5 0 0 1 748 934" stroke="#b8b8b8" stroke-width="1.8" fill="none"/>
<!-- parent dropdown -->
<rect x="760" y="919" width="159.5" height="30" fill="#272727"/>
<path d="M897 931.5L903.5 938L910 931.5" stroke="#d0d0d0" stroke-width="1.9" fill="none"/>
</svg>
<div class="t sans" style="left:191.5px;top:892px;font-size:17px;color:#8e8e8e">#</div>
<div class="t sans" style="left:250px;top:891px;font-size:21.3px;color:#888">源名称</div>
<div class="t sans" style="left:727.5px;top:891px;font-size:21.3px;color:#888">父级和链接</div>
<div class="t sans" style="left:192px;top:928px;font-size:19.5px;-webkit-text-stroke:0.8px #c8c8c8;color:#c8c8c8">1</div>
<div class="t serif" style="left:250.5px;top:922px;font-size:23px;font-weight:bold;color:#d0d0d0">T</div>
<div class="t sans" style="left:284.5px;top:928px;font-size:20.3px;color:#d4d4d4">&lt;空文本图层&gt;</div>
<div class="t sans" style="left:770px;top:926px;font-size:20.5px;color:#d4d4d4">无</div>
<!-- bottom-left icons -->
<svg style="left:0;top:1120px" width="120" height="33" viewBox="0 1120 120 33">
<rect x="9.5" y="1122" width="29" height="28.5" fill="#202225"/>
<g stroke="#78acf4" stroke-width="1.6" fill="#0e1c38"><rect x="15" y="1126.5" width="11" height="11"/><rect x="18.8" y="1130.3" width="11" height="11"/><rect x="22.5" y="1134.2" width="11" height="11"/></g><circle cx="28" cy="1139.7" r="1.7" fill="#78acf4"/>
<g stroke="#c0c0c0" stroke-width="1.8" fill="none"><circle cx="54" cy="1132.5" r="6.8"/><rect x="55.5" y="1134" width="10.5" height="10.5" fill="#272727"/></g>
<path d="M80 1135L84.5 1130.5V1139.5ZM98 1135L93.5 1130.5V1139.5Z" fill="#c0c0c0"/><rect x="84.5" y="1125.5" width="9" height="19" rx="2" fill="#8a8a8a"/><path d="M85.5 1128C87.5 1128 87 1131 87 1133C87 1134.5 86 1135 85 1135C86 1135 87 1135.5 87 1137C87 1139 87.5 1142 85.5 1142M92.5 1128C90.5 1128 91 1131 91 1133C91 1134.5 92 1135 93 1135C92 1135 91 1135.5 91 1137C91 1139 90.5 1142 92.5 1142" stroke="#272727" stroke-width="1.2" fill="none"/>
</svg>

<!-- window edges -->
<div style="left:0;top:0;width:1920px;height:1px;background:#f4f4f4"></div>
<svg style="left:0;top:0" width="1920" height="1153" viewBox="0 0 1920 1153"><path d="M0 0H6A6 6 0 0 0 0 6Z" fill="#111"/><path d="M1920 0H1914A6 6 0 0 1 1920 6Z" fill="#fff"/><path d="M0 1153V1144A9 9 0 0 0 9 1153Z" fill="#0a0a0a"/><path d="M1920 1153V1142A11 11 0 0 1 1909 1153Z" fill="#f4f4f4"/><path d="M1918.5 30V1143" stroke="#1a1a1a" stroke-width="3"/><path d="M0 1152H1910" stroke="#141414" stroke-width="2"/></svg>

</body>
</html>
